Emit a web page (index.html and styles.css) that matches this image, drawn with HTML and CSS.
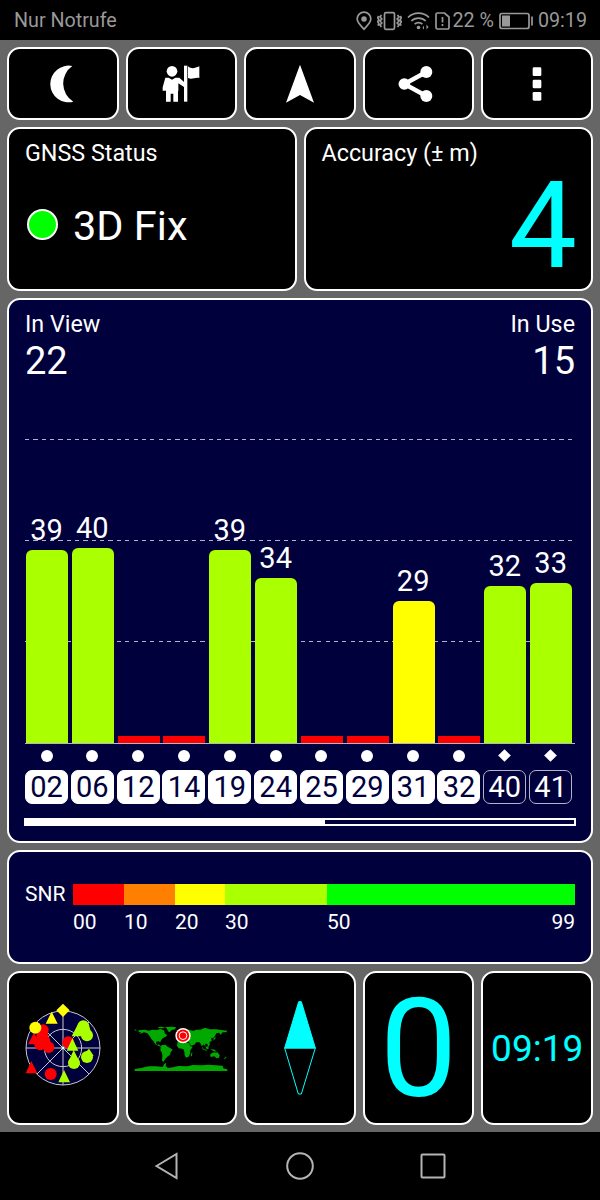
FILE: index.html
```html
<!DOCTYPE html>
<html lang="de">
<head>
    <meta charset="UTF-8">
    <meta name="viewport" content="width=device-width, initial-scale=1.0">
    <title>GNSS Status</title>
    <link rel="stylesheet" href="styles.css">
</head>
<body>
    <header class="statusbar">
        <span class="carrier">Nur Notrufe</span>
        <svg class="st-pin" width="16" height="20" viewBox="0 0 16 20"><path d="M8 18.200C5.500 15.200 1.200 11.700 1.200 8a6.800 6.800 0 0 1 13.600 0c0 3.700-4.300 7.200-6.800 10.200z"/><circle cx="8" cy="8" r="1.900" class="solid"/></svg>
        <svg class="st-vib" width="25" height="20" viewBox="0 0 25 20"><rect x="7.500" y="1.700" width="10" height="16.600" rx="1.500"/><path d="M4.500 4l-1.500 2 1.800 2-1.800 2 1.800 2-1.800 2 1.500 2M1.700 5l-1 1.700 1.200 2-1.200 2 1.200 2-1 2M20.500 4l1.500 2-1.800 2 1.800 2-1.800 2 1.800 2-1.500 2M23.300 5l1 1.700-1.200 2 1.200 2-1.200 2 1 2"/></svg>
        <svg class="st-wifi" width="23" height="20" viewBox="0 0 23 20"><path d="M1 6.500a15 15 0 0 1 21 0M4.300 10a10.300 10.300 0 0 1 14.400 0M7.600 13.200a5.600 5.600 0 0 1 7.800 0"/><circle cx="11.500" cy="16.500" r="1.800" class="solid thin"/><path class="solid thin" d="M15.500 17l1.500-2.500v4zM21.500 16l-2 2.500v-5z"/></svg>
        <svg class="st-sim" width="15" height="20" viewBox="0 0 15 20"><path d="M1 3.500v13a1.500 1.500 0 0 0 1.500 1.500h10a1.500 1.500 0 0 0 1.500-1.500V6L9.500 2h-7A1.500 1.500 0 0 0 1 3.500zM7.500 6v5.500M7.500 13v2"/></svg>
        <span class="percent">22 %</span>
        <svg class="st-batt" width="35" height="20" viewBox="0 0 35 20"><rect x="1" y="2.500" width="29" height="15" rx="2"/><rect x="3" y="4.500" width="8" height="11" class="solid thin"/><path d="M33 5.500v9"/></svg>
        <span class="clock">09:19</span>
    </header>

    <main>
        <nav class="tiles toolbar">
            <button class="panel"><svg class="icon" viewBox="-60 -60 120 120"><path d="M28-54A55 55 0 1 0 31 53A64 64 0 0 1 28-54z"/></svg></button>
            <button class="panel"><svg class="icon" viewBox="-60 -60 120 120"><circle cx="-27" cy="-38" r="16"/><path d="M-47-19h10l10 6 10-6h12L10-5V10L-8-2V21h-1V53h-14V29h-8V53h-14V20h-10V10z"/><path d="M9-55H19V53H9z"/><path d="M21-53C34-43 41-48 55-53V-18C43-22 34-12 21-18z"/></svg></button>
            <button class="panel"><svg class="icon" viewBox="-60 -60 120 120"><path d="M0-58L-42 56L0 33L42 56z"/></svg></button>
            <button class="panel"><svg class="icon shift" viewBox="-60 -60 120 120"><path class="link" d="M28-36L-38 0L28 36"/><circle cx="-38" cy="0" r="17.500"/><circle cx="28" cy="-36" r="18"/><circle cx="28" cy="36" r="18"/></svg></button>
            <button class="panel"><svg class="icon" viewBox="-60 -60 120 120"><rect x="-13" y="-50" width="26" height="26" rx="4"/><rect x="-13" y="-13" width="26" height="26" rx="4"/><rect x="-13" y="24" width="26" height="26" rx="4"/></svg></button>
        </nav>

        <section class="overview">
            <div class="panel fix">
                <h2>GNSS Status</h2>
                <div class="fix-row"><span class="led"></span>3D Fix</div>
            </div>
            <div class="panel accuracy">
                <h2>Accuracy (± m)</h2>
                <div class="accuracy-value">4</div>
            </div>
        </section>

        <section class="panel blue satellites">
            <div class="counts">
                <div>
                    <h2>In View</h2>
                    <div class="count">22</div>
                </div>
                <div class="right">
                    <h2>In Use</h2>
                    <div class="count">15</div>
                </div>
            </div>
            <div class="plot">
                <div class="col">39<span class="bar good" style="height: 193px"></span></div>
                <div class="col">40<span class="bar good" style="height: 195px"></span></div>
                <div class="col"><span class="bar none"></span></div>
                <div class="col"><span class="bar none"></span></div>
                <div class="col">39<span class="bar good" style="height: 193px"></span></div>
                <div class="col">34<span class="bar good" style="height: 165px"></span></div>
                <div class="col"><span class="bar none"></span></div>
                <div class="col"><span class="bar none"></span></div>
                <div class="col">29<span class="bar weak" style="height: 142px"></span></div>
                <div class="col"><span class="bar none"></span></div>
                <div class="col">32<span class="bar good" style="height: 157px"></span></div>
                <div class="col">33<span class="bar good" style="height: 160px"></span></div>
            </div>
            <div class="ids">
                <div class="sat"><i class="dot"></i><b>02</b></div>
                <div class="sat"><i class="dot"></i><b>06</b></div>
                <div class="sat"><i class="dot"></i><b>12</b></div>
                <div class="sat"><i class="dot"></i><b>14</b></div>
                <div class="sat"><i class="dot"></i><b>19</b></div>
                <div class="sat"><i class="dot"></i><b>24</b></div>
                <div class="sat"><i class="dot"></i><b>25</b></div>
                <div class="sat"><i class="dot"></i><b>29</b></div>
                <div class="sat"><i class="dot"></i><b>31</b></div>
                <div class="sat"><i class="dot"></i><b>32</b></div>
                <div class="sat sbas"><i class="diamond"></i><b>40</b></div>
                <div class="sat sbas"><i class="diamond"></i><b>41</b></div>
            </div>
            <div class="scroll"><span></span></div>
        </section>

        <section class="panel blue snr">
            <span class="snr-label">SNR</span>
            <div class="scale">
                <div class="step"><span class="swatch bad"></span>00</div>
                <div class="step"><span class="swatch poor"></span>10</div>
                <div class="step"><span class="swatch weak"></span>20</div>
                <div class="step"><span class="swatch good"></span>30</div>
                <div class="step"><span class="swatch best"></span><div class="ends"><span>50</span><span>99</span></div></div>
            </div>
        </section>

        <section class="tiles bottom">
            <div class="panel">
                <svg width="90" height="90" viewBox="53 113 270 270">
                    <g class="sky">
                        <circle cx="188" cy="248" r="111"/>
                        <circle cx="188" cy="248" r="56"/>
                        <path d="M188 137V359M77 248H299M110 170L266 326M266 170L110 326"/>
                    </g>
                    <g class="fill-bad">
                        <circle cx="128" cy="194" r="17"/><circle cx="126" cy="212" r="18"/><circle cx="120" cy="237" r="18"/><circle cx="132" cy="228" r="18"/><circle cx="145" cy="246" r="17"/><circle cx="204" cy="231" r="18"/><circle cx="151" cy="326" r="18"/>
                        <path d="M101 202L83 237H119zM93 287L76 324H111z"/>
                    </g>
                    <g class="fill-good">
                        <circle cx="249" cy="183" r="18"/><circle cx="252" cy="195" r="18"/><circle cx="260" cy="210" r="18"/><circle cx="260" cy="275" r="18"/><circle cx="221" cy="293" r="18"/>
                        <path d="M232 178L214 213H250zM216 219L199 256H234zM266 250L245 272H280zM220 254L204 290H238zM191 314L174 351H209z"/>
                    </g>
                    <g class="fill-weak">
                        <circle cx="105" cy="187" r="18"/>
                        <path d="M154 139L136 175H172zM188 115L208 135L188 155L168 135z"/>
                    </g>
                    <circle cx="188" cy="248" r="4" fill="#fff"/>
                </svg>
            </div>
            <div class="panel">
                <svg class="map" width="94" height="46" viewBox="43 183 282 138">
                    <g class="land">
                        <path d="M57 196L75 194L88 197L98 194L112 195L122 192L133 196L136 206L143 210L138 215L131 218L124 226L122 232L117 229L110 230L109 236L114 240L118 238L122 243L127 241L124 246L116 242L107 238L101 228L95 222L89 212L83 205L73 202L60 207L64 201L57 202z"/>
                        <path d="M113 187L126 185L136 188L134 190L120 190zM136 187L150 185L169 186L166 193L155 196L150 202L145 199L142 191zM45 193l5 1v3l-5-1z"/>
                        <path d="M127 240L137 239L145 246L150 248L159 254L153 262L151 269L143 275L137 282L131 290L127 287L128 272L127 264L122 255L123 247z"/>
                        <path d="M174 229L182 228L196 231L207 234L213 244L219 246L212 256L211 266L207 275L199 278L195 270L194 260L191 252L177 250L172 242zM215 264l3-2-1 10-4 3z"/>
                        <path d="M172 226L174 219L181 214L180 209L190 208L190 199L198 192L208 194L221 198L229 194L242 194L256 188L270 193L290 193L305 195L323 197L320 202L308 202L304 210L298 203L290 205L286 213L280 220L275 218L276 228L269 232L271 238L266 245L262 236L256 237L258 246L252 238L247 244L240 232L230 232L224 239L214 242L207 230L199 227L205 223L195 219L190 225L184 218z"/>
                        <path d="M246 244L252 252L263 255L260 257L249 253zM258 246l8-3 1 8-6 2zM272 252L286 254L290 260L281 258zM271 269L278 263L286 262L289 264L292 260L300 270L298 278L291 280L284 274L273 276zM312 281l7-6 1 3-7 5zM282 220l5-5 1 5-7 7zM175 209l4-5 2 8-6 2z"/>
                        <path d="M45 312L64 309L88 304L109 304L129 306L134 297L140 293L138 303L145 309L164 306L176 303L203 304L219 300L246 301L266 299L288 301L309 302L311 310L323 313V318H45z"/>
                    </g>
                    <circle cx="190" cy="212" r="23" fill="#fff"/>
                    <circle cx="190" cy="212" r="18.500" fill="#f00"/>
                    <circle cx="190" cy="212" r="11.500" fill="none" stroke="#fff" stroke-width="3"/>
                </svg>
            </div>
            <div class="panel">
                <svg class="needle" width="34" height="96" viewBox="129 105 102 288"><path d="M176 110H184L226 249H134z" class="north"/><path d="M134 249L175 387H184L226 249z"/></svg>
            </div>
            <div class="panel speed">0</div>
            <div class="panel time">09:19</div>
        </section>
    </main>

    <footer class="navbar">
        <svg width="30" height="30" viewBox="0 0 30 30"><path d="M4.500 15L24.500 3V27z"/></svg>
        <svg width="30" height="30" viewBox="0 0 30 30"><circle cx="15" cy="15" r="12.800"/></svg>
        <svg width="30" height="30" viewBox="0 0 30 30"><rect x="3.500" y="3.500" width="23" height="23" rx="1"/></svg>
    </footer>
</body>
</html>
```
FILE: styles.css
```css
* {
    box-sizing: border-box;
}
body {
    margin: 0;
    width: 600px;
    height: 1200px;
    display: flex;
    flex-direction: column;
    background: #000;
    color: #fff;
    font-family: Roboto, sans-serif;
}
svg {
    display: block;
    flex: none;
}
h2 {
    margin: 0;
    font-size: 23.3px;
    font-weight: 400;
    line-height: 26px;
}

/* status bar */
.statusbar {
    height: 40px;
    padding: 1px 13px 0 14px;
    display: flex;
    align-items: center;
    color: #999;
    font-size: 19.7px;
    line-height: 39px;
}
.statusbar svg {
    fill: none;
    stroke: #999;
    stroke-width: 1.7;
}
.statusbar .solid {
    fill: #999;
}
.statusbar .thin {
    stroke: none;
}
.carrier {
    flex: 1;
}
.st-vib {
    margin-left: 5px;
}
.st-wifi {
    margin-left: 5px;
}
.st-sim {
    margin-left: 5px;
}
.percent {
    margin: 0 5px 0 3px;
}
.clock {
    margin-left: 4px;
}

/* panels */
main {
    height: 1092px;
    padding: 7px;
    display: flex;
    flex-direction: column;
    gap: 7px;
    background: #666;
}
.panel {
    border: 2px solid #fff;
    border-radius: 13px;
    background: #000;
    min-width: 0;
}
.blue {
    background: #00003c;
}
.tiles {
    display: grid;
    grid-template-columns: repeat(5, 1fr);
    gap: 7px;
}
.tiles .panel {
    display: flex;
    align-items: center;
    justify-content: center;
    padding: 0;
}
.toolbar {
    height: 73px;
}
.icon {
    width: 40px;
    height: 40px;
    margin-top: 1px;
    fill: #fff;
}
.shift {
    margin-right: 4px;
}
.link {
    fill: none;
    stroke: #fff;
    stroke-width: 13;
}

/* fix and accuracy */
.overview {
    height: 164px;
    display: grid;
    grid-template-columns: 1fr 1fr;
    gap: 7px;
}
.overview .panel {
    padding: 11px 16px 0;
}
.fix-row {
    margin-top: 36px;
    display: flex;
    align-items: center;
    font-size: 41.5px;
    line-height: 48px;
}
.led {
    width: 31px;
    height: 31px;
    margin: 0 15px 3px 2px;
    border: 2px solid #fff;
    border-radius: 50%;
    background: #0f0;
}
.accuracy-value {
    margin-right: -2px;
    color: #0ff;
    font-size: 121px;
    line-height: 120px;
    text-align: right;
}

/* satellites */
.satellites {
    height: 546px;
    padding: 11px 16px 0;
}
.counts {
    height: 128px;
    display: flex;
    justify-content: space-between;
}
.count {
    margin-top: 5px;
    font-size: 38px;
    line-height: 38px;
}
.right {
    text-align: right;
}
.plot {
    --dash: repeating-linear-gradient(90deg, #b4b4c6 0 4.2px, transparent 4.2px 8.35px);
    height: 305px;
    display: grid;
    grid-template-columns: repeat(12, 1fr);
    border-bottom: 1px solid #b4b4c8;
    background: var(--dash) 0 0 / 547px 1px no-repeat, var(--dash) 0 101px / 547px 1px no-repeat, var(--dash) 0 202px / 547px 1px no-repeat;
}
.col {
    display: flex;
    flex-direction: column;
    justify-content: flex-end;
    width: 43px;
    text-align: center;
    font-size: 29px;
    line-height: 29px;
}
.bar {
    width: 42px;
    margin: 5px 0 0 1px;
    border-radius: 6px 6px 0 0;
}
.bar.none {
    height: 7px;
    border-radius: 0;
    background: #f00;
}
.good {
    background: #af0;
}
.weak {
    background: #ff0;
}
.bad {
    background: #f00;
}
.poor {
    background: #ff8000;
}
.best {
    background: #0f0;
}
.ids {
    margin-top: 6px;
    display: grid;
    grid-template-columns: repeat(12, 1fr);
}
.sat {
    display: flex;
    flex-direction: column;
    align-items: center;
    width: 43px;
}
.dot {
    width: 12px;
    height: 12px;
    border-radius: 50%;
    background: #fff;
}
.diamond {
    width: 9px;
    height: 9px;
    margin: 1.5px;
    background: #fff;
    transform: rotate(45deg);
}
.sat b {
    width: 43px;
    height: 34px;
    margin-top: 8px;
    border: 1px solid #fff;
    border-radius: 7px;
    background: #fff;
    color: #00003c;
    font-size: 29px;
    font-weight: 400;
    line-height: 32px;
    text-align: center;
}
.sat.sbas b {
    border-color: #b4b4c8;
    background: none;
    color: #fff;
}
.scroll {
    height: 8px;
    margin: 14px -1px 0;
    border: 2px solid #fff;
}
.scroll span {
    display: block;
    width: 299px;
    height: 100%;
    background: #fff;
}

/* signal to noise scale */
.snr {
    height: 114px;
    padding: 32px 16px 0;
    display: flex;
    font-size: 21px;
}
.snr-label {
    width: 48px;
    line-height: 20px;
}
.scale {
    flex: 1;
    display: grid;
    grid-template-columns: 51fr 51fr 50fr 102fr 248fr;
}
.swatch {
    display: block;
    height: 21px;
    margin-bottom: 5px;
}
.ends {
    display: flex;
    justify-content: space-between;
}

/* bottom tiles */
.bottom {
    height: 154px;
}
.sky {
    fill: #00003c;
    stroke: #c8c8d2;
    stroke-width: 3;
}
.sky circle + circle {
    fill: none;
}
.fill-bad {
    fill: #f00;
}
.fill-good {
    fill: #af0;
}
.fill-weak {
    fill: #ff0;
}
.map {
    margin-top: 2px;
}
.land {
    fill: #00a800;
}
.needle {
    fill: none;
    stroke: #0ff;
    stroke-width: 3;
}
.north {
    fill: #0ff;
}
.speed, .time {
    color: #0ff;
}
.tiles .speed {
    padding-top: 3px;
    font-size: 138px;
    line-height: 147px;
}
.tiles .time {
    padding-top: 1px;
    font-size: 37px;
}

/* navigation bar */
.navbar {
    height: 68px;
    display: flex;
    align-items: center;
    justify-content: center;
    gap: 103px;
}
.navbar svg {
    fill: none;
    stroke: #b4b4b4;
    stroke-width: 2;
}
```
